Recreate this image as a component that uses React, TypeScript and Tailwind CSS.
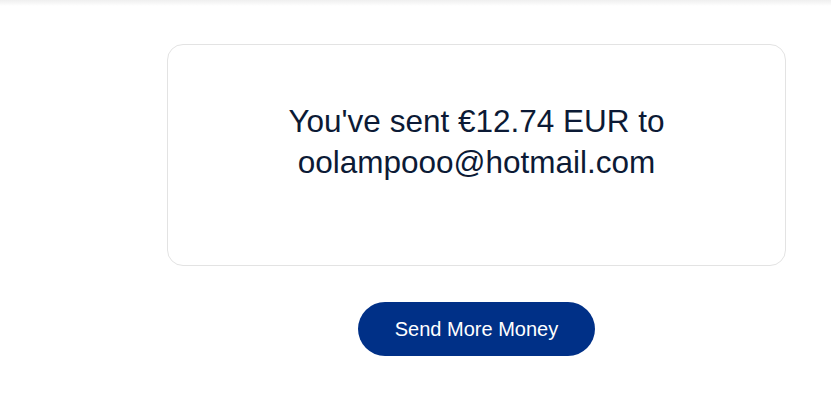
import React from "react";

function SuccessCard({ amount, recipient }: { amount: string; recipient: string }) {
  return (
    <div className="mx-auto w-[619px] rounded-2xl border border-[#e3e3e3] bg-white px-8 pt-[56px] pb-[82px] text-center">
      <h1 className="text-[31.5px] leading-[41px] font-normal text-[#0c1a35]">
        You've sent {amount} EUR to
        <br />
        {recipient}
      </h1>
    </div>
  );
}

export default function App() {
  return (
    <div className="min-h-[414px] bg-white font-['Liberation_Sans',Arial,sans-serif]">
      <div className="h-[6px] bg-gradient-to-b from-[#efefef] to-white" />
      <div className="pt-[38px] pl-[167px] pr-[45px]">
        <SuccessCard amount="€12.74" recipient="oolampooo@hotmail.com" />
        <div className="mt-9 flex justify-center">
          <button className="h-[54px] w-[237px] rounded-full bg-[#003087] text-[20px] text-white">
            Send More Money
          </button>
        </div>
      </div>
    </div>
  );
}
